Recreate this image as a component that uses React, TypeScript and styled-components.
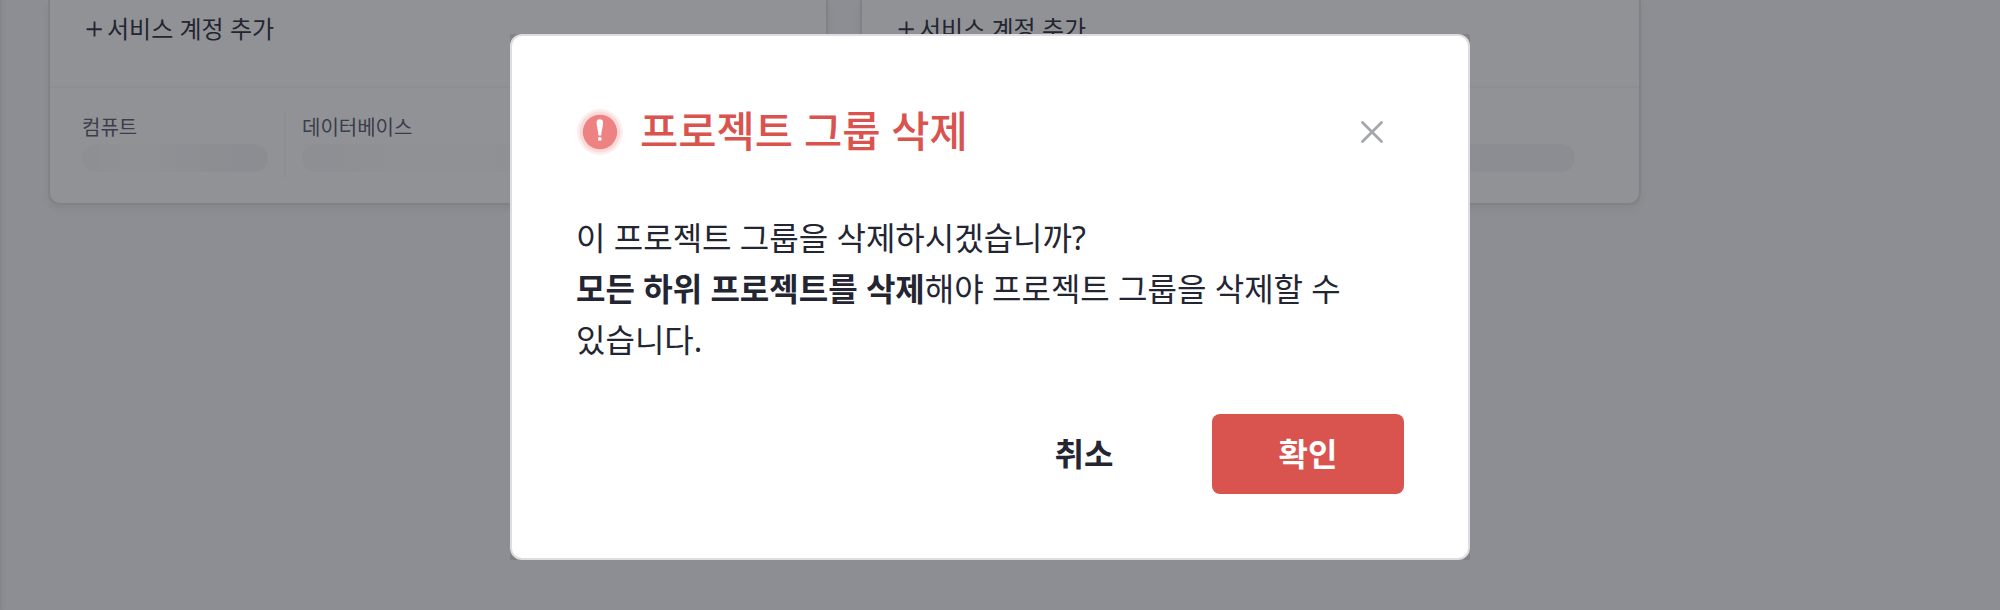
import React from "react";
import styled, { createGlobalStyle } from "styled-components";

const GlobalStyle = createGlobalStyle`
  *, *::before, *::after { box-sizing: border-box; }
  body {
    margin: 0;
    overflow: hidden;
    font-family: "Noto Sans", "Noto Sans CJK KR", sans-serif;
    color: #232533;
  }
  button { font-family: inherit; border: 0; background: none; padding: 0; color: inherit; }
`;

const Page = styled.main`
  position: relative;
  width: 2000px;
  height: 610px;
  overflow: hidden;
  background: linear-gradient(90deg, #e6e6e9 0, #f1f1f3 3px, #f7f7f8 8px);
`;

const CardGrid = styled.section`
  display: grid;
  grid-template-columns: 780px 781px;
  column-gap: 32px;
  padding-left: 48px;
`;

const Card = styled.article`
  height: 205px;
  border: 2px solid #dfdfe1;
  border-top: 0;
  border-radius: 0 0 12px 12px;
  background: #fff;
  box-shadow: 0 4px 8px rgba(35, 37, 51, 0.08);
`;

const CardAction = styled.div`
  display: flex;
  align-items: center;
  gap: 5px;
  height: 88px;
  padding: 0 0 29px 36px;
  border-bottom: 2px solid #f7f7f8;
  font-size: 24px;
  line-height: 36px;
`;

const Metrics = styled.div`
  display: flex;
  padding: 24px 32px 0;
`;

const Metric = styled.div<{ $width: number; $divided?: boolean }>`
  width: ${(p) => p.$width}px;
  height: 66px;
  ${(p) => p.$divided && "margin-left: 16px; padding-left: 16px; border-left: 2px solid #f7f7f8;"}
`;

const MetricLabel = styled.div`
  height: 32px;
  color: #52546a;
  font-size: 20px;
  line-height: 31px;
`;

const Skeleton = styled.div`
  height: 28px;
  border-radius: 14px;
  background: linear-gradient(90deg, #f8f8f9 0%, #fdfdfd 30%, #f9f9fa 55%, #f5f5f6 80%, #f4f4f6 100%);
`;

const Overlay = styled.div`
  position: absolute;
  inset: 0;
  display: flex;
  justify-content: center;
  align-items: flex-start;
  padding: 34px 20px 0 0;
  background: rgba(35, 37, 46, 0.5);
`;

const DialogFrame = styled.div`
  background: rgba(70, 72, 80, 0.18);
`;

const Dialog = styled.section`
  width: 960px;
  height: 526px;
  padding: 64px;
  border: 2px solid #dddddf;
  border-radius: 12px;
  background: #fff;
`;

const DialogHeader = styled.header`
  display: flex;
  align-items: center;
  height: 64px;
`;

const DialogTitle = styled.h2`
  flex: 1;
  margin: 0 0 0 16px;
  padding-bottom: 2px;
  color: #d9534f;
  font-size: 41.6px;
  font-weight: 500;
  line-height: 62px;
`;

const CloseButton = styled.button`
  display: flex;
  width: 64px;
  height: 64px;
  align-items: center;
  justify-content: center;
`;

const Message = styled.p`
  margin: 48px 0 0;
  font-size: 32px;
  line-height: 51.2px;
  strong { font-weight: 700; }
`;

const Actions = styled.footer`
  display: flex;
  justify-content: flex-end;
  gap: 32px;
  margin-top: 48px;
`;

const ActionButton = styled.button<{ $danger?: boolean }>`
  width: 192px;
  height: 80px;
  border-radius: 8px;
  background: ${(p) => (p.$danger ? "#d9534f" : "transparent")};
  color: ${(p) => (p.$danger ? "#fff" : "#232533")};
  font-size: 32px;
  font-weight: 700;
  line-height: 48px;
`;

const PlusIcon = () => (
  <svg width="16" height="16" viewBox="0 0 16 16" fill="none" stroke="currentColor" strokeWidth="1.9">
    <path d="M8.5 .4v15.2M.6 8.2h15.2" />
  </svg>
);

const AlertIcon = () => (
  <svg width="48" height="48" viewBox="0 0 48 48">
    <circle cx="24" cy="24" r="23" fill="#fdeeee" />
    <circle cx="24" cy="24" r="20.5" fill="#fadada" />
    <circle cx="24" cy="24" r="17.2" fill="#ee8282" />
    <path d="M20.6 14.5C20.6 12.2 21.8 11.2 23.8 11.2S27 12.2 27 14.5C27 19 25.5 22 25.2 27.5H22.4C22.1 22 20.6 19 20.6 14.5Z" fill="#fff" />
    <circle cx="23.8" cy="30.9" r="1.9" fill="#fff" />
  </svg>
);

const CloseIcon = () => (
  <svg width="24" height="24" viewBox="0 0 24 24" fill="none" stroke="#a5a6ae" strokeWidth="2.8" strokeLinecap="round">
    <path d="M2.5 2.5l19 19M21.5 2.5l-19 19" />
  </svg>
);

const ProjectCard = ({ databaseWidth, labels = [] }: { databaseWidth: number; labels?: string[] }) => (
  <Card>
    <CardAction>
      <PlusIcon />
      서비스 계정 추가
    </CardAction>
    <Metrics>
      <Metric $width={186}>
        <MetricLabel>{labels[0]}</MetricLabel>
        <Skeleton />
      </Metric>
      <Metric $width={databaseWidth} $divided>
        <MetricLabel>{labels[1]}</MetricLabel>
        <Skeleton />
      </Metric>
    </Metrics>
  </Card>
);

export default function App() {
  return (
    <>
      <GlobalStyle />
      <Page>
        <CardGrid>
          <ProjectCard databaseWidth={478} labels={["컴퓨트", "데이터베이스"]} />
          <ProjectCard databaseWidth={479} />
        </CardGrid>
        <Overlay>
          <DialogFrame>
            <Dialog role="dialog" aria-modal="true">
              <DialogHeader>
                <AlertIcon />
                <DialogTitle>프로젝트 그룹 삭제</DialogTitle>
                <CloseButton aria-label="닫기">
                  <CloseIcon />
                </CloseButton>
              </DialogHeader>
              <Message>
                이 프로젝트 그룹을 삭제하시겠습니까?
                <br />
                <strong>모든 하위 프로젝트를 삭제</strong>해야 프로젝트 그룹을 삭제할 수
                <br />
                있습니다.
              </Message>
              <Actions>
                <ActionButton>취소</ActionButton>
                <ActionButton $danger>확인</ActionButton>
              </Actions>
            </Dialog>
          </DialogFrame>
        </Overlay>
      </Page>
    </>
  );
}
